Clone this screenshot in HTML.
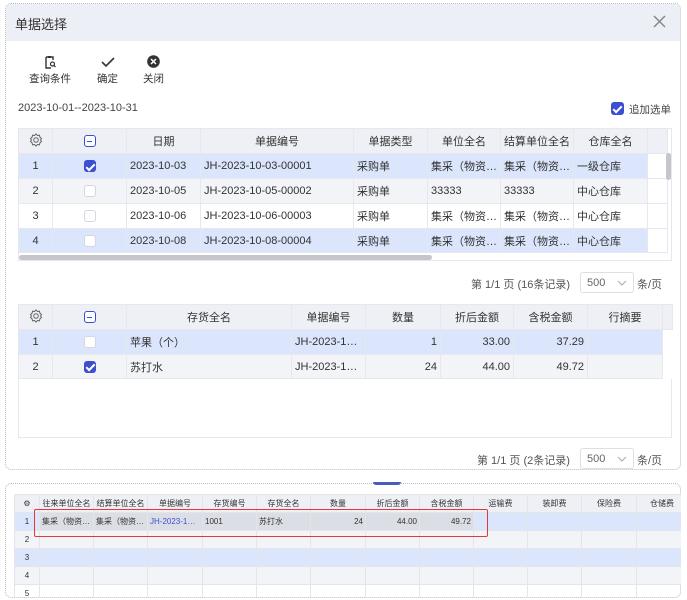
<!DOCTYPE html>
<html><head><meta charset="utf-8"><style>
*{box-sizing:border-box;margin:0;padding:0}
body{width:687px;height:600px;background:#fff;font-family:"Liberation Sans","Noto Sans CJK SC",sans-serif;color:#333;position:relative;overflow:hidden;font-size:11px}
.a{position:absolute}
.dlg{left:5px;top:3px;width:676px;height:467px;border:1px dotted #bbb;border-radius:6px;overflow:hidden}
.hdr{left:0;top:0;width:100%;height:37px;background:#eceff6}
table{border-collapse:collapse;table-layout:fixed;position:absolute;font-size:11px}
td{border:1px solid #e6e8ee;white-space:nowrap;overflow:hidden;padding:0 3px}
.h td{background:#eef0f6;text-align:center}
.c{text-align:center}.r{text-align:right}
.sel td{background:#dbe5fb}
.alt td{background:#f3f4f7}
.cb{display:inline-block;width:12px;height:12px;border:1px solid #d4d7df;border-radius:3px;background:#fff;vertical-align:middle}
.cb.on{background:#3b4fd0;border-color:#3b4fd0;position:relative}
.cb.on:after{content:"";position:absolute;left:3px;top:0.5px;width:3px;height:7px;border:solid #fff;border-width:0 2px 2px 0;transform:rotate(45deg)}
.cb.mi{border-color:#3b4fd0;position:relative}
.cb.mi:after{content:"";position:absolute;left:2.5px;top:4.5px;width:5px;height:1.5px;background:#3b4fd0}
.pg{font-size:11px;color:#555}
.selb{width:54px;height:21px;border:1px solid #dcdfe6;border-radius:3px;font-size:11px;color:#666;padding:4px 6px}
.b td{height:18px;font-size:8px;border-color:#e3e5ea;padding:0 2px}
</style></head><body>
<div class="a dlg">
 <div class="a hdr"></div>
 <div class="a" style="left:9px;top:10px;font-size:13px;color:#333">单据选择</div>
 <svg class="a" style="left:647px;top:11px" width="13" height="13"><path d="M1 1L12 12M12 1L1 12" stroke="#888" stroke-width="1.5"/></svg>
</div>
<svg class="a" style="left:44px;top:55px" width="12" height="14"><path d="M2 2h7v3M2 2v11h5" stroke="#333" stroke-width="1.4" fill="none"/><rect x="4" y="1" width="3" height="2" fill="#333"/><circle cx="8.5" cy="9" r="2" stroke="#333" fill="none" stroke-width="1.2"/><path d="M10 10.5l1.5 1.5" stroke="#333" stroke-width="1.2"/></svg>
<div class="a" style="left:29px;top:71px;font-size:10.5px">查询条件</div>
<svg class="a" style="left:101px;top:57px" width="14" height="11"><path d="M1 5l4 4L13 1" stroke="#333" stroke-width="1.6" fill="none"/></svg>
<div class="a" style="left:97px;top:71px;font-size:10.5px">确定</div>
<svg class="a" style="left:147px;top:55px" width="13" height="13"><circle cx="6.5" cy="6.5" r="6.3" fill="#333"/><path d="M4 4l5 5M9 4l-5 5" stroke="#fff" stroke-width="1.5"/></svg>
<div class="a" style="left:143px;top:71px;font-size:10.5px">关闭</div>
<div class="a" style="left:18px;top:102px;font-size:11px;color:#444">2023-10-01--2023-10-31</div>
<span class="a cb on" style="left:611px;top:102px;width:13px;height:13px"></span>
<div class="a" style="left:629px;top:102px;font-size:10.5px;color:#444">追加选单</div>

<div class="a" style="left:18px;top:128px;width:654px;height:133px;border:1px solid #e6e8ee"></div>
<table style="left:18px;top:128px;width:649px">
<colgroup><col style="width:34px"><col style="width:74px"><col style="width:74px"><col style="width:153px"><col style="width:74px"><col style="width:73px"><col style="width:73px"><col style="width:74px"><col style="width:20px"></colgroup>
<tr class="h" style="height:25px"><td><svg width="14" height="14" viewBox="0 0 14 14"><circle cx="7" cy="7" r="2.3" fill="none" stroke="#666"/><path d="M7 1l1.5 1.5 2-.3.4 2 1.6 1.3-1 1.5 1 1.5-1.6 1.3-.4 2-2-.3L7 13l-1.5-1.5-2 .3-.4-2L1.5 8.5l1-1.5-1-1.5 1.6-1.3.4-2 2 .3z" fill="none" stroke="#666"/></svg></td><td><span class="cb mi"></span></td><td>日期</td><td>单据编号</td><td>单据类型</td><td>单位全名</td><td>结算单位全名</td><td>仓库全名</td><td></td></tr>
<tr class="sel" style="height:25px"><td class="c">1</td><td class="c"><span class="cb on"></span></td><td>2023-10-03</td><td>JH-2023-10-03-00001</td><td>采购单</td><td>集采（物资…</td><td>集采（物资…</td><td>一级仓库</td><td style="background:#fff"></td></tr>
<tr class="alt" style="height:25px"><td class="c">2</td><td class="c"><span class="cb"></span></td><td>2023-10-05</td><td>JH-2023-10-05-00002</td><td>采购单</td><td>33333</td><td>33333</td><td>中心仓库</td><td style="background:#fff"></td></tr>
<tr style="height:25px"><td class="c">3</td><td class="c"><span class="cb"></span></td><td>2023-10-06</td><td>JH-2023-10-06-00003</td><td>采购单</td><td>集采（物资…</td><td>集采（物资…</td><td>中心仓库</td><td></td></tr>
<tr class="sel" style="height:24px"><td class="c">4</td><td class="c"><span class="cb"></span></td><td>2023-10-08</td><td>JH-2023-10-08-00004</td><td>采购单</td><td>集采（物资…</td><td>集采（物资…</td><td>中心仓库</td><td style="background:#fff"></td></tr>
</table>
<div class="a" style="left:666px;top:153px;width:5px;height:27px;background:#c4c6cc;border-radius:3px"></div>
<div class="a" style="left:19px;top:255px;width:413px;height:5px;background:#c4c6cc;border-radius:3px"></div>

<div class="a pg" style="left:471px;top:276px">第 1/1 页 (16条记录)</div>
<div class="a selb" style="left:580px;top:272px">500<svg style="position:absolute;right:6px;top:7px" width="10" height="6"><path d="M1 1l4 4 4-4" stroke="#aaa" fill="none"/></svg></div>
<div class="a pg" style="left:637px;top:276px">条/页</div>

<div class="a" style="left:18px;top:304px;width:654px;height:134px;border:1px solid #e6e8ee"></div>
<table style="left:18px;top:304px;width:654px">
<colgroup><col style="width:34px"><col style="width:74px"><col style="width:165px"><col style="width:74px"><col style="width:75px"><col style="width:73px"><col style="width:74px"><col style="width:75px"><col style="width:10px"></colgroup>
<tr class="h" style="height:25px"><td><svg width="14" height="14" viewBox="0 0 14 14"><circle cx="7" cy="7" r="2.3" fill="none" stroke="#666"/><path d="M7 1l1.5 1.5 2-.3.4 2 1.6 1.3-1 1.5 1 1.5-1.6 1.3-.4 2-2-.3L7 13l-1.5-1.5-2 .3-.4-2L1.5 8.5l1-1.5-1-1.5 1.6-1.3.4-2 2 .3z" fill="none" stroke="#666"/></svg></td><td><span class="cb mi"></span></td><td>存货全名</td><td>单据编号</td><td>数量</td><td>折后金额</td><td>含税金额</td><td>行摘要</td><td></td></tr>
<tr class="sel" style="height:25px"><td class="c">1</td><td class="c"><span class="cb"></span></td><td>苹果（个）</td><td>JH-2023-1…</td><td class="r">1</td><td class="r">33.00</td><td class="r">37.29</td><td></td><td style="background:#fff;border:0"></td></tr>
<tr class="alt" style="height:24px"><td class="c">2</td><td class="c"><span class="cb on"></span></td><td>苏打水</td><td>JH-2023-1…</td><td class="r">24</td><td class="r">44.00</td><td class="r">49.72</td><td></td><td style="background:#fff;border:0"></td></tr>
</table>
<div class="a pg" style="left:477px;top:452px">第 1/1 页 (2条记录)</div>
<div class="a selb" style="left:580px;top:448px">500<svg style="position:absolute;right:6px;top:7px" width="10" height="6"><path d="M1 1l4 4 4-4" stroke="#aaa" fill="none"/></svg></div>
<div class="a pg" style="left:637px;top:452px">条/页</div>

<div class="a" style="left:5px;top:483px;width:676px;height:115px;border:1px dotted #bbb;border-radius:6px"></div>
<div class="a" style="left:373px;top:482px;width:28px;height:3px;background:#4a5bbf;border-radius:0 0 3px 3px"></div>
<div class="a" style="left:14px;top:494px;width:667px;height:103px;overflow:hidden">
<table class="b" style="left:0;top:0;width:673px">
<colgroup><col style="width:25px"><col style="width:54px"><col style="width:54px"><col style="width:55px"><col style="width:54px"><col style="width:54px"><col style="width:55px"><col style="width:54px"><col style="width:54px"><col style="width:54px"><col style="width:54px"><col style="width:55px"><col style="width:51px"></colgroup>
<tr class="h" style="height:17px"><td>⚙</td><td>往来单位全名</td><td>结算单位全名</td><td>单据编号</td><td>存货编号</td><td>存货全名</td><td>数量</td><td>折后金额</td><td>含税金额</td><td>运输费</td><td>装卸费</td><td>保险费</td><td>仓储费</td></tr>
<tr class="sel"><td class="c">1</td><td style="background:#dcdee5">集采（物资…</td><td style="background:#dcdee5">集采（物资…</td><td style="background:#dcdee5;color:#3b4fd0">JH-2023-1…</td><td style="background:#dcdee5">1001</td><td style="background:#dcdee5">苏打水</td><td class="r" style="background:#dcdee5">24</td><td class="r" style="background:#dcdee5">44.00</td><td class="r" style="background:#dcdee5">49.72</td><td></td><td></td><td></td><td></td></tr>
<tr class="alt"><td class="c">2</td><td></td><td></td><td></td><td></td><td></td><td></td><td></td><td></td><td></td><td></td><td></td><td></td></tr>
<tr class="sel"><td class="c">3</td><td></td><td></td><td></td><td></td><td></td><td></td><td></td><td></td><td></td><td></td><td></td><td></td></tr>
<tr class="alt"><td class="c">4</td><td></td><td></td><td></td><td></td><td></td><td></td><td></td><td></td><td></td><td></td><td></td><td></td></tr>
<tr><td class="c">5</td><td></td><td></td><td></td><td></td><td></td><td></td><td></td><td></td><td></td><td></td><td></td><td></td></tr>
</table></div>
<div class="a" style="left:34px;top:509px;width:454px;height:28px;border:1.5px solid #e53935;border-radius:2px"></div>
</body></html>
